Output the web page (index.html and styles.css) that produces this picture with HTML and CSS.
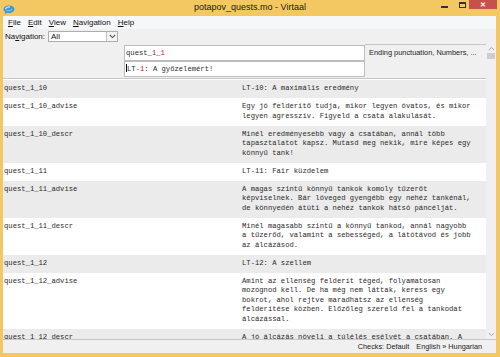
FILE: index.html
```html
<!DOCTYPE html>
<html lang="hu">
<head>
    <meta charset="UTF-8">
    <meta name="viewport" content="width=device-width, initial-scale=1.0">
    <title>potapov_quests.mo - Virtaal</title>
    <link rel="stylesheet" href="styles.css">
</head>
<body>
    <div class="window">
        <div class="titlebar">
            <div class="app-icon">
                <svg width="12" height="10" viewBox="0 0 12 10">
                    <path d="M6 0.6C9 0.6 11.4 2.2 11.4 4.3C11.4 6.4 9 8 6 8C5.3 8 4.7 7.9 4.1 7.8L1.6 9.4L2.4 7.1C1.2 6.4 0.6 5.4 0.6 4.3C0.6 2.2 3 0.6 6 0.6Z" fill="#3a9ad9"/>
                    <path d="M2.6 3.6C3.4 2.4 5 1.8 6.6 1.9" stroke="#cfeafc" stroke-width="1.1" fill="none" stroke-linecap="round"/>
                    <path d="M3.4 5.4C5 5.9 7.4 5.8 9.2 4.6" stroke="#8fcdf5" stroke-width="0.9" fill="none" stroke-linecap="round"/>
                </svg>
            </div>
            <div class="title">potapov_quests.mo - Virtaal</div>
            <div class="controls">
                <span class="ctl-min"></span>
                <span class="ctl-max"></span>
                <span class="ctl-close">✕</span>
            </div>
        </div>

        <div class="client">
            <div class="menubar">
                <span><u>F</u>ile</span>
                <span><u>E</u>dit</span>
                <span><u>V</u>iew</span>
                <span><u>N</u>avigation</span>
                <span><u>H</u>elp</span>
            </div>

            <div class="navbar">
                <span class="nav-label">Na<u>v</u>igation:</span>
                <div class="combo">
                    <span class="combo-value">All</span>
                    <div class="combo-btn">
                        <svg width="7" height="5" viewBox="0 0 7 5"><polyline points="0.8,1 3.5,3.6 6.2,1" fill="none" stroke="#555" stroke-width="1.1"/></svg>
                    </div>
                </div>
            </div>

            <div class="main">
                <div class="units">
                    <div class="unit-edit">
                        <div class="edit-pad"></div>
                        <div class="edit-boxes">
                            <div class="edit-box">quest_<span class="ph">1</span>_<span class="ph">1</span></div>
                            <div class="edit-box"><span class="caret"></span>LT<span class="ph">-1</span>: A győzelemért!</div>
                        </div>
                        <div class="edit-notes">Ending punctuation, Numbers, ...</div>
                    </div>

                    <div class="unit odd">
                        <div>quest_1_10</div>
                        <div>LT-10: A maximális eredmény</div>
                    </div>
                    <div class="unit">
                        <div>quest_1_10_advise</div>
                        <div>Egy jó felderítő tudja, mikor legyen óvatos, és mikor<br>legyen agresszív. Figyeld a csata alakulását.</div>
                    </div>
                    <div class="unit odd">
                        <div>quest_1_10_descr</div>
                        <div>Minél eredményesebb vagy a csatában, annál több<br>tapasztalatot kapsz. Mutasd meg nekik, mire képes egy<br>könnyű tank!</div>
                    </div>
                    <div class="unit">
                        <div>quest_1_11</div>
                        <div>LT-11: Fair küzdelem</div>
                    </div>
                    <div class="unit odd">
                        <div>quest_1_11_advise</div>
                        <div>A magas szintű könnyű tankok komoly tűzerőt<br>képviselnek. Bár löveged gyengébb egy nehéz tankénál,<br>de könnyedén átüti a nehéz tankok hátsó páncélját.</div>
                    </div>
                    <div class="unit">
                        <div>quest_1_11_descr</div>
                        <div>Minél magasabb szintű a könnyű tankod, annál nagyobb<br>a tűzerőd, valamint a sebességed, a látótávod és jobb<br>az álcázásod.</div>
                    </div>
                    <div class="unit odd">
                        <div>quest_1_12</div>
                        <div>LT-12: A szellem</div>
                    </div>
                    <div class="unit">
                        <div>quest_1_12_advise</div>
                        <div>Amint az ellenség felderít téged, folyamatosan<br>mozognod kell. De ha még nem láttak, keress egy<br>bokrot, ahol rejtve maradhatsz az ellenség<br>felderítése közben. Előzőleg szereld fel a tankodat<br>álcázással.</div>
                    </div>
                    <div class="unit odd">
                        <div>quest_1_12_descr</div>
                        <div>A jó álcázás növeli a túlélés esélyét a csatában. A</div>
                    </div>
                </div>

                <div class="scrollbar">
                    <div class="sb-arrow">
                        <svg width="7" height="5" viewBox="0 0 7 5"><polyline points="0.8,4 3.5,1.4 6.2,4" fill="none" stroke="#a6a6a6" stroke-width="1"/></svg>
                    </div>
                    <div class="sb-thumb"></div>
                    <div class="sb-track"></div>
                    <div class="sb-arrow">
                        <svg width="7" height="5" viewBox="0 0 7 5"><polyline points="0.8,1 3.5,3.6 6.2,1" fill="none" stroke="#a6a6a6" stroke-width="1"/></svg>
                    </div>
                </div>
            </div>

            <div class="statusbar">
                <span>Checks: Default</span>
                <span>English » Hungarian</span>
            </div>
        </div>
    </div>
</body>
</html>
```

FILE: styles.css
```css
* { margin: 0; padding: 0; box-sizing: border-box; }
body { width: 500px; height: 357px; overflow: hidden; font-family: "Liberation Sans", Arial, sans-serif; }
u { text-decoration: underline; text-underline-offset: 1px; }

.window { width: 500px; height: 357px; background: #f3c862; display: flex; flex-direction: column; }

/* title bar */
.titlebar { height: 16px; display: grid; grid-template-columns: 1fr auto 1fr; align-items: start; }
.app-icon { padding: 1px 0 0 3px; height: 12px; }
.title { font-size: 9px; line-height: 15px; color: #1a1a1a; }
.controls { justify-self: end; display: flex; align-items: flex-start; margin-right: 3px; }
.ctl-min { width: 7px; height: 2px; background: #333; margin: 6px 11px 0 0; }
.ctl-max { width: 7px; height: 6px; border: 1px solid #333; border-top-width: 2px; margin: 2px 3px 0 0; }
.ctl-close { width: 28px; height: 9px; background: #c8504c; color: #fff; font-size: 7px; line-height: 9px; text-align: center; font-weight: bold; }

/* client area */
.client { flex: 1; margin: 0 4px 4px 3px; background: #f0f0f0; display: flex; flex-direction: column; min-height: 0; }

.menubar { height: 13px; background: #f6f7f9; display: flex; gap: 7px; padding-left: 5px; font-size: 8px; line-height: 14px; color: #111; }

.navbar { height: 14px; display: flex; align-items: center; gap: 3px; padding-left: 2px; font-size: 8px; color: #111; }
.combo { width: 70px; height: 11px; border: 1px solid #adadad; background: #fff; display: flex; }
.combo-value { flex: 1; padding-left: 2px; line-height: 9px; }
.combo-btn { width: 11px; border-left: 1px solid #c4c4c4; background: #f4f4f4; display: flex; align-items: center; justify-content: center; }

/* unit list */
.main { flex: 1; display: flex; min-height: 0; }
.units { flex: 1; overflow: hidden; background: #fff; font-family: "Liberation Mono", "Courier New", monospace; font-size: 7.2px; color: #2a2a2a; }

.unit-edit { display: grid; grid-template-columns: 121px 241px 1fr; background: #f0f0f0; border-bottom: 1px solid #c6c6c6; margin-bottom: 1px; }
.edit-boxes { padding: 2px 0 1px; }
.edit-box { height: 16px; border: 1px solid #bdbdbd; background: #fff; padding-left: 1px; line-height: 14px; white-space: nowrap; }
.ph { color: #c42424; }
.caret { display: inline-block; width: 0; height: 8px; border-left: 1px solid #000; vertical-align: -1px; }
.edit-notes { margin-top: 1px; border-top: 1px solid #c6c6c6; padding: 3px 0 0 4px; font-family: "Liberation Sans", Arial, sans-serif; font-size: 7.4px; line-height: 10px; color: #222; white-space: nowrap; }

.unit { display: grid; grid-template-columns: 238px 1fr; background: #fff; line-height: 9.5px; }
.unit.odd { background: #ebebeb; }
.unit > div { padding: 4px 1px 4.5px; white-space: nowrap; }

.scrollbar { width: 10px; background: #f0f0f0; display: flex; flex-direction: column; padding-top: 1px; }
.sb-arrow { height: 9px; display: flex; align-items: center; justify-content: center; }
.sb-thumb { height: 6px; margin: 0 1px; background: #cdcdcd; }
.sb-track { flex: 1; }

.statusbar { height: 14px; border-top: 1px solid #c6c6c6; display: flex; justify-content: flex-end; align-items: center; gap: 7px; padding-right: 14px; font-size: 7.3px; color: #222; }
```
